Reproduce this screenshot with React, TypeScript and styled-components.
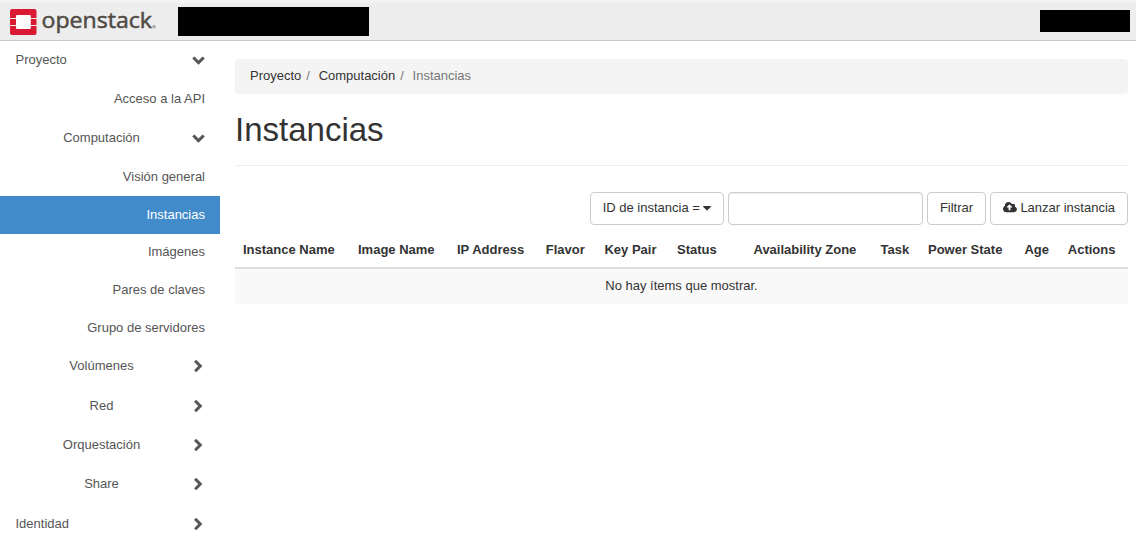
import React from "react";
import styled, { createGlobalStyle } from "styled-components";

const GlobalStyle = createGlobalStyle`
  * { box-sizing: border-box; }
  body {
    margin: 0;
    background: #fff;
    color: #333;
    font-family: Arial, "Liberation Sans", sans-serif;
    font-size: 13px;
    line-height: 18px;
    overflow: hidden;
  }
`;

const Header = styled.header`
  display: flex;
  align-items: flex-start;
  height: 41px;
  padding-right: 6px;
  background: #ededed;
  border-top: 3px solid #f1f3f6;
  border-bottom: 1px solid #c8c8c8;
`;

const Logo = styled.svg`
  display: block;
  width: 150px;
  height: 37px;
  margin-left: 8px;
`;

const Redacted = styled.div<{ $w: number; $h: number; $top: number }>`
  width: ${(p) => p.$w}px;
  height: ${(p) => p.$h}px;
  margin-top: ${(p) => p.$top}px;
  background: #000;
`;

const ProjectPicker = styled(Redacted)`
  margin-left: 20px;
`;

const UserMenu = styled(Redacted)`
  margin-left: auto;
`;

const Page = styled.div`
  display: flex;
  height: 512px;
`;

const Sidebar = styled.nav`
  width: 220px;
  flex: none;
`;

const NavRow = styled.a<{ $gap: number; $active?: boolean }>`
  display: flex;
  align-items: center;
  height: 38px;
  margin-bottom: ${(p) => p.$gap}px;
  padding: 0 15px;
  color: ${(p) => (p.$active ? "#fff" : "#555")};
  background: ${(p) => (p.$active ? "#428bca" : "transparent")};
`;

const NavLabel = styled.span<{ $align: string }>`
  flex: 1;
  padding-left: ${(p) => (p.$align === "left" ? 0.5 : 0)}px;
  text-align: ${(p) => p.$align};
`;

const ChevronSlot = styled.span<{ $lift: number }>`
  display: flex;
  justify-content: center;
  width: 14px;
  margin-left: 3px;
  padding-bottom: ${(p) => p.$lift}px;
`;

const Glyph = styled.svg`
  display: block;
  fill: currentColor;
  flex: none;
`;

const Chevron = styled(Glyph)`
  stroke: currentColor;
  stroke-width: 70;
`;

const ButtonGlyph = styled(Glyph)`
  margin-bottom: 1px;
`;

const Main = styled.main`
  flex: 1;
  padding: 18px 8px 0 15px;
`;

const Breadcrumb = styled.ol`
  display: flex;
  height: 35px;
  margin: 0;
  padding: 8px 15px;
  list-style: none;
  background: #f4f4f4;
  border-radius: 4px;
`;

const Crumb = styled.li<{ $current?: boolean }>`
  color: ${(p) => (p.$current ? "#777" : "#333")};
  &:not(:first-child)::before {
    content: "/";
    padding: 0 8.700px 0 5px;
    color: #777;
  }
`;

const Title = styled.h1`
  height: 72px;
  margin: 0;
  padding-top: 18px;
  border-bottom: 1px solid #eee;
  font-size: 33px;
  font-weight: 400;
  line-height: 36px;
`;

const Toolbar = styled.div`
  display: flex;
  justify-content: flex-end;
  gap: 4px;
  margin-top: 26px;
`;

const Button = styled.button<{ $w: number }>`
  display: flex;
  align-items: center;
  justify-content: center;
  gap: 3.500px;
  width: ${(p) => p.$w}px;
  height: 33px;
  padding: 0 0 1px;
  border: 1px solid #ccc;
  border-radius: 4px;
  background: #fff;
  color: #333;
  font: inherit;
  white-space: nowrap;
`;

const FilterInput = styled.input`
  width: 195px;
  height: 33px;
  border: 1px solid #ccc;
  border-radius: 4px;
  background: #fff;
  box-shadow: inset 0 1px 1px rgba(0, 0, 0, 0.075);
`;

const Table = styled.table`
  width: 893px;
  margin-top: 7px;
  border-collapse: collapse;
  table-layout: fixed;
`;

const HeadCell = styled.th<{ $w: number }>`
  width: ${(p) => p.$w}px;
  height: 36px;
  padding: 0 0 0 8px;
  border-bottom: 2px solid #ddd;
  text-align: left;
  white-space: nowrap;
`;

const EmptyCell = styled.td`
  height: 36px;
  padding: 0 0 1px;
  background: #f9f9f9;
  text-align: center;
`;

const paths = {
  down: "M1683 808l-742 741q-19 19-45 19t-45-19l-742-741q-19-19-19-45.500t19-45.500l166-165q19-19 45-19t45 19l531 531 531-531q19-19 45-19t45 19l166 165q19 19 19 45.500t-19 45.500z",
  right: "M1363 877l-742 742q-19 19-45 19t-45-19l-166-166q-19-19-19-45t19-45l531-531-531-531q-19-19-19-45t19-45l166-166q19-19 45-19t45 19l742 742q19 19 19 45t-19 45z",
  caret: "M1408 704q0 26-19 45l-448 448q-19 19-45 19t-45-19l-448-448q-19-19-19-45t19-45 45-19h896q26 0 45 19t19 45z",
  upload: "M1216 864q0-14-9-23l-352-352q-9-9-23-9t-23 9l-351 351q-10 12-10 24 0 14 9 23t23 9h224v352q0 13 9.500 22.500t22.500 9.500h192q13 0 22.500-9.500t9.500-22.500v-352h224q13 0 22.500-9.500t9.500-22.500zm640 288q0 159-112.500 271.500t-271.500 112.500h-1088q-185 0-316.500-131.500t-131.500-316.500q0-130 70-240t188-165q-2-30-2-43 0-212 150-362t362-150q156 0 285.500 87t188.500 231q71-62 166-62 106 0 181 75t75 181q0 76-41 138 130 31 213.500 135.500t83.500 238.500z",
};

type NavItem = {
  label: string;
  align: "left" | "center" | "right";
  chevron?: "down" | "right";
  gap: number;
  active?: boolean;
};

const navItems: NavItem[] = [
  { label: "Proyecto", align: "left", chevron: "down", gap: 1 },
  { label: "Acceso a la API", align: "right", gap: 1 },
  { label: "Computación", align: "center", chevron: "down", gap: 1 },
  { label: "Visión general", align: "right", gap: 0 },
  { label: "Instancias", align: "right", gap: -1, active: true },
  { label: "Imágenes", align: "right", gap: 0 },
  { label: "Pares de claves", align: "right", gap: 0 },
  { label: "Grupo de servidores", align: "right", gap: 0 },
  { label: "Volúmenes", align: "center", chevron: "right", gap: 2 },
  { label: "Red", align: "center", chevron: "right", gap: 1 },
  { label: "Orquestación", align: "center", chevron: "right", gap: 1 },
  { label: "Share", align: "center", chevron: "right", gap: 2 },
  { label: "Identidad", align: "left", chevron: "right", gap: 0 },
];

const columns: [string, number][] = [
  ["Instance Name", 115],
  ["Image Name", 99],
  ["IP Address", 88.7],
  ["Flavor", 58.8],
  ["Key Pair", 72.5],
  ["Status", 76.5],
  ["Availability Zone", 127],
  ["Task", 47.5],
  ["Power State", 96.5],
  ["Age", 43.3],
  ["Actions", 68.2],
];

export default function App() {
  return (
    <>
      <GlobalStyle />
      <Header>
        <Logo viewBox="8 3 150 37" aria-label="openstack">
          <path d="M16 15h15v14h-15z" fill="#fbfbfb" />
          <g fill="#da1a32">
            <path d="M12 9h22.500q2 0 2 2v7h-5.700v-2q0-1-1-1h-12.800q-1 0-1 1v2h-6v-7q0-2 2-2z" />
            <path d="M10 19h6v6h-6zM30.800 19h5.700v6h-5.700z" />
            <path d="M10 26h6v2q0 1 1 1h12.800q1 0 1-1v-2h5.700v7q0 2-2 2h-22.500q-2 0-2-2z" />
          </g>
          <text
            x="41.500"
            y="28.300"
            fill="#504a44"
            stroke="#504a44"
            strokeWidth="0.5"
            fontFamily="'Open Sans', 'Noto Sans', sans-serif"
            fontSize="22.500"
            fontWeight="400"
            textLength="110.500"
            lengthAdjust="spacingAndGlyphs"
          >
            openstack
          </text>
          <circle cx="154" cy="26.700" r="1.800" fill="#aaa8a6" />
        </Logo>
        <ProjectPicker $w={191} $h={29} $top={4} />
        <UserMenu $w={90} $h={22} $top={7} />
      </Header>
      <Page>
        <Sidebar>
          {navItems.map((item) => (
            <NavRow key={item.label} $gap={item.gap} $active={item.active}>
              <NavLabel $align={item.align}>{item.label}</NavLabel>
              {item.chevron && (
                <ChevronSlot $lift={item.chevron === "down" ? 2 : 0}>
                  <Chevron width="13" height="13" viewBox="0 0 1792 1792">
                    <path d={paths[item.chevron]} />
                  </Chevron>
                </ChevronSlot>
              )}
            </NavRow>
          ))}
        </Sidebar>
        <Main>
          <Breadcrumb>
            <Crumb>Proyecto</Crumb>
            <Crumb>Computación</Crumb>
            <Crumb $current>Instancias</Crumb>
          </Breadcrumb>
          <Title>Instancias</Title>
          <Toolbar>
            <Button $w={134}>
              ID de instancia =
              <ButtonGlyph width="8" height="14" viewBox="384 0 1024 1792">
                <path d={paths.caret} />
              </ButtonGlyph>
            </Button>
            <FilterInput aria-label="Filtro" />
            <Button $w={59}>Filtrar</Button>
            <Button $w={138}>
              <ButtonGlyph width="13.930" height="13" viewBox="-64 0 1920 1792">
                <path d={paths.upload} />
              </ButtonGlyph>
              Lanzar instancia
            </Button>
          </Toolbar>
          <Table>
            <thead>
              <tr>
                {columns.map(([name, w]) => (
                  <HeadCell key={name} $w={w}>
                    {name}
                  </HeadCell>
                ))}
              </tr>
            </thead>
            <tbody>
              <tr>
                <EmptyCell colSpan={columns.length}>No hay ítems que mostrar.</EmptyCell>
              </tr>
            </tbody>
          </Table>
        </Main>
      </Page>
    </>
  );
}
